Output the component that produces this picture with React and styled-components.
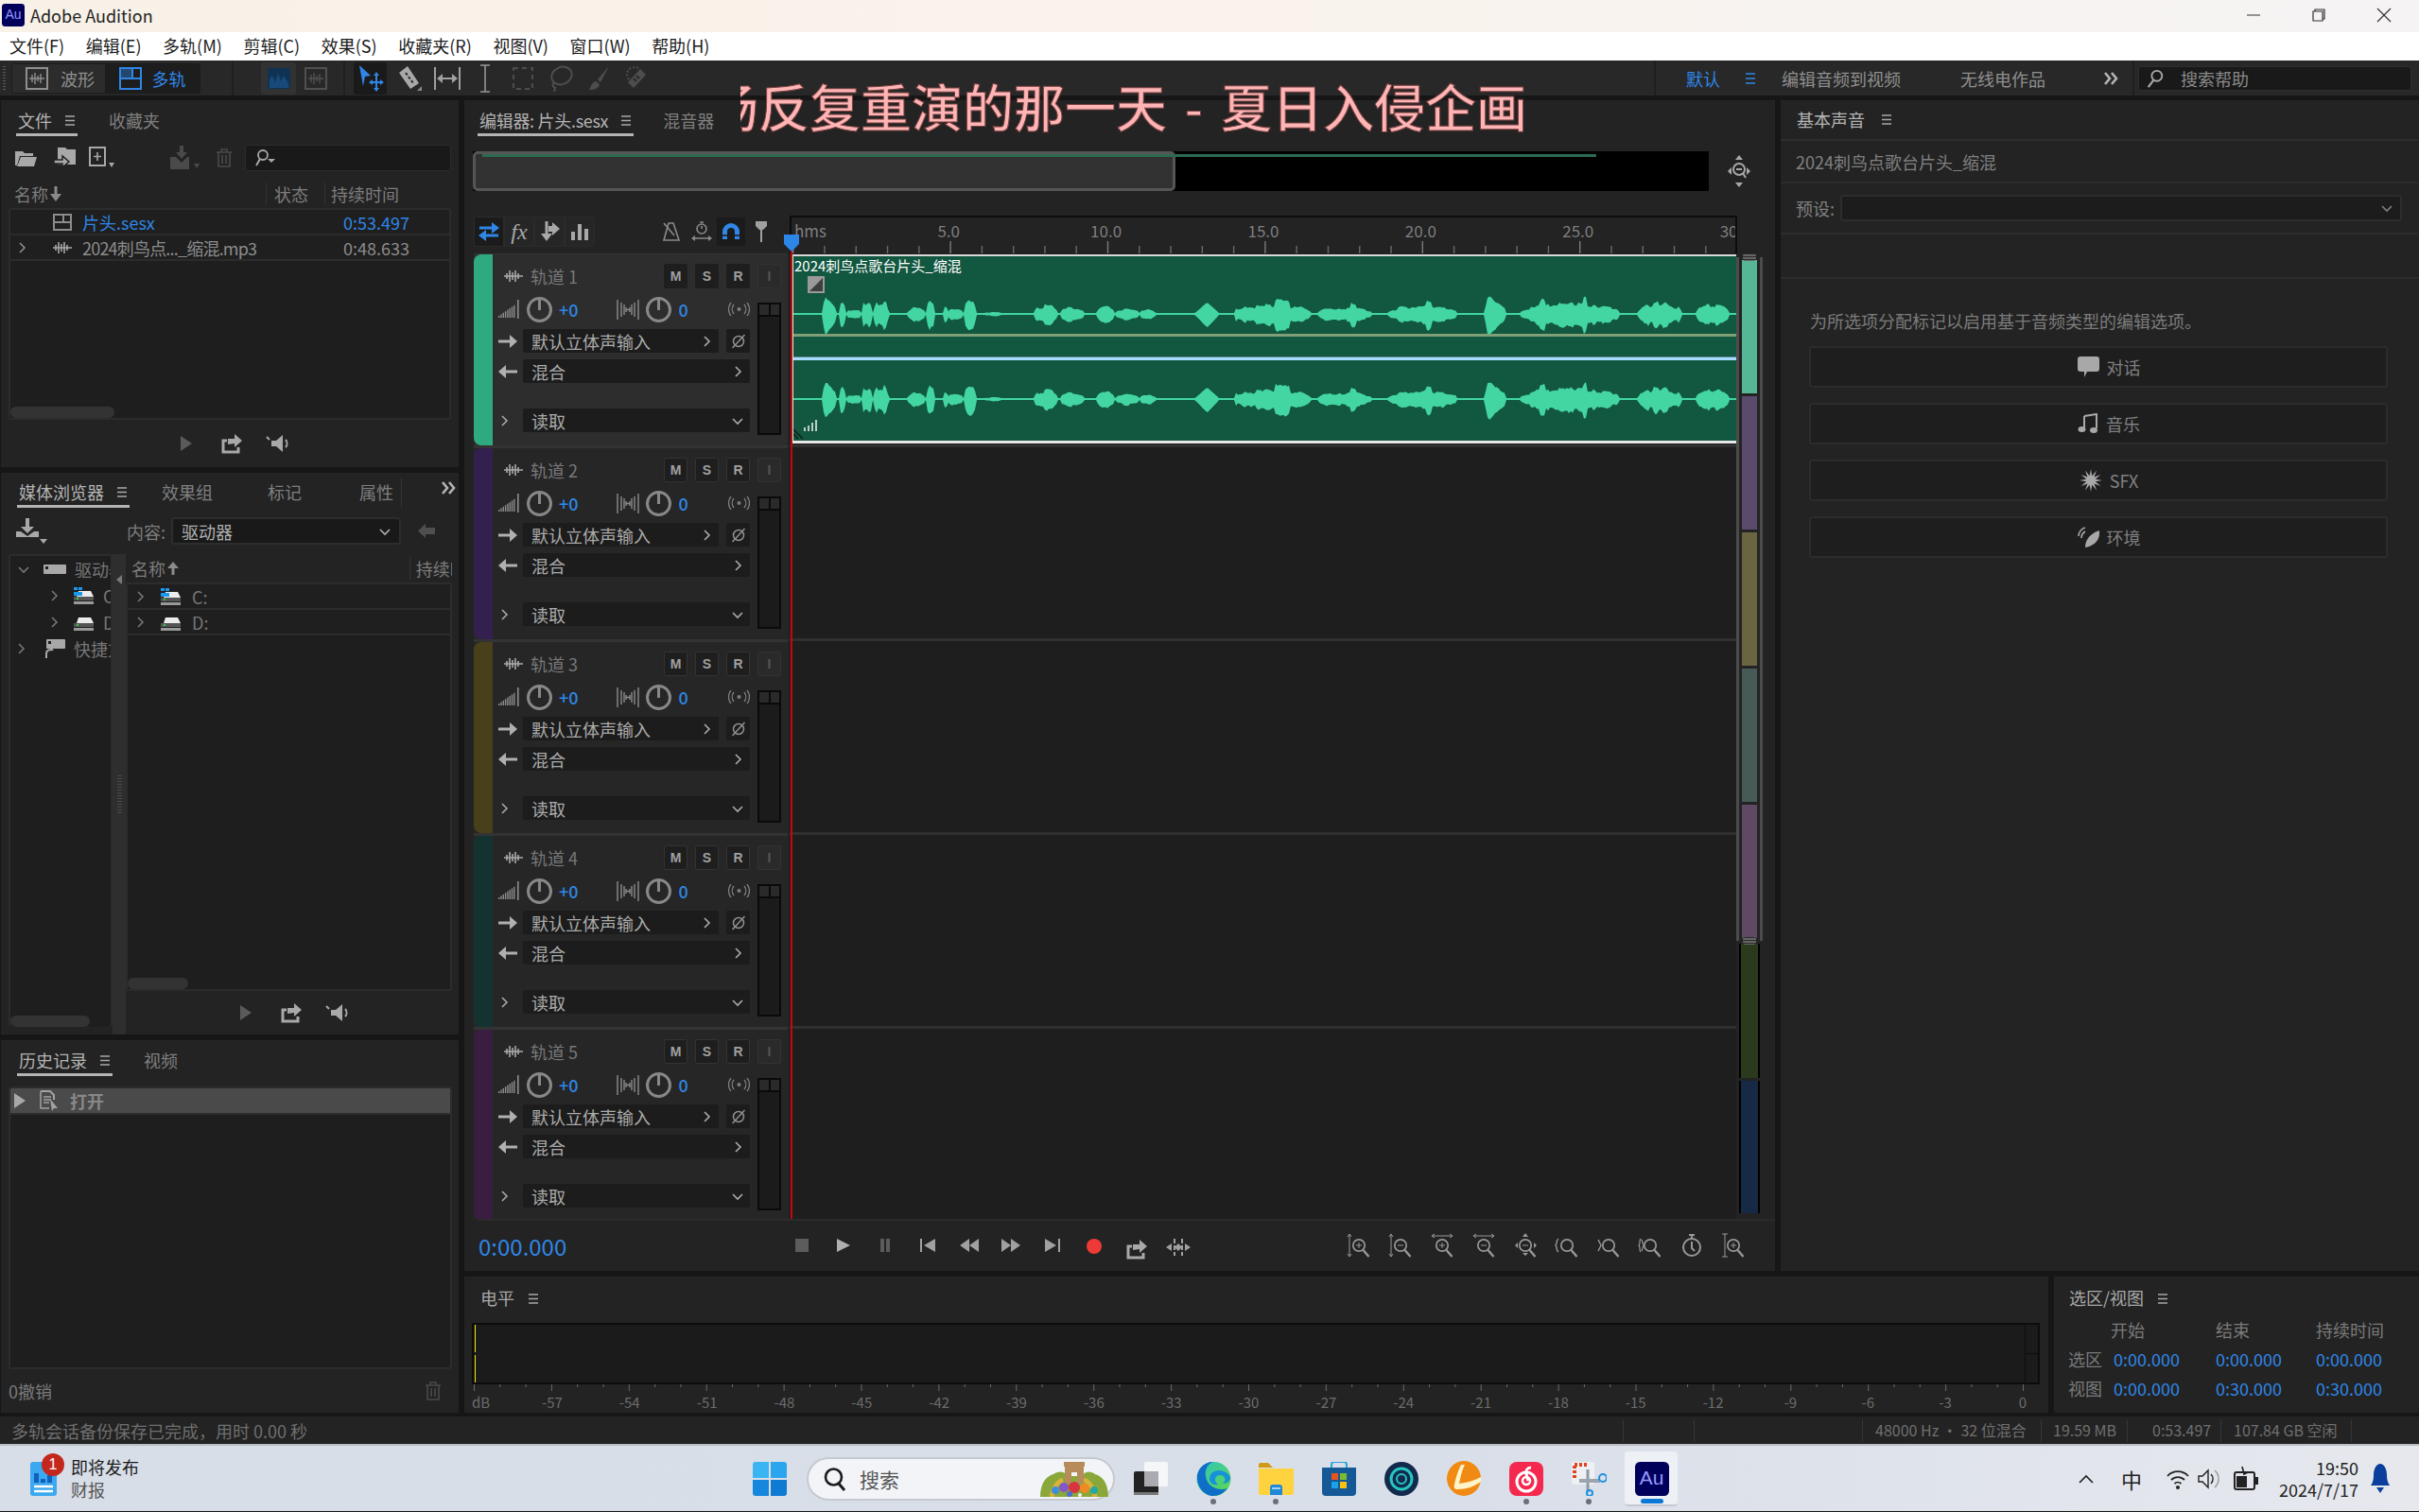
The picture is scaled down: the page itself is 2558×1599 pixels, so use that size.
import React from 'react'
import styled, { createGlobalStyle } from 'styled-components'

const GlobalStyle = createGlobalStyle`
    html, body {
        margin: 0;
        background: #161616;
    }
    * {
        box-sizing: border-box;
    }
`;

const Page = styled.div`
    position: relative;
    width: 2558px;
    height: 1599px;
    overflow: hidden;
    display: flex;
    flex-direction: column;
    background: #161616;
    color: #9a9a9a;
    font-family: "Noto Sans CJK SC", "Noto Sans", sans-serif;
    font-size: 18px;
    line-height: 24px;
`;

const Ico = ({ w, h, vb, children, color }) => (
    <svg width={w} height={h} viewBox={vb || `0 0 ${w} ${h}`} fill="none" stroke="none" style={{ display: 'block', flex: 'none', color }}>
        {children}
    </svg>
);

/* ---------- title + menu ---------- */

const TitleBar = styled.div`
    height: 34px;
    display: flex;
    align-items: center;
    padding: 0 3px 2px 2px;
    color: #222;
    background: linear-gradient(90deg, #f8f1e7, #faf3ec 50%, #f5f3f4);
`;

const AuLogo = styled.div`
    width: ${p => p.$size}px;
    height: ${p => p.$size}px;
    flex: none;
    display: flex;
    align-items: center;
    justify-content: center;
    background: #00005b;
    border-radius: ${p => p.$size / 7}px;
    color: #9999ff;
    font-family: "Liberation Sans", sans-serif;
    font-size: ${p => p.$size * 0.58}px;
    line-height: 1;
`;

const AppName = styled.span`
    margin-left: 6px;
`;

const WindowButtons = styled.div`
    margin-left: auto;
    display: flex;
    align-items: center;
`;

const WindowButton = styled.div`
    width: 69px;
    display: flex;
    justify-content: center;
`;

const MenuBar = styled.div`
    height: 30px;
    display: flex;
    align-items: center;
    gap: 22.6px;
    padding: 0 10px 2px;
    background: #fff;
    color: #1c1c1c;
`;

/* ---------- top toolbar ---------- */

const Toolbar = styled.div`
    height: 37px;
    display: flex;
    align-items: center;
    background: #282828;
`;

const Grip = styled.div`
    width: 3px;
    height: 26px;
    margin-left: 3px;
    background: repeating-linear-gradient(#5a5a5a 0 1px, transparent 1px 3px);
`;

const ModeGroup = styled.div`
    margin-left: 6px;
    display: flex;
    border: 1px solid #1c1c1c;
    border-radius: 3px;
`;

const ModeButton = styled.div`
    width: ${p => p.$w}px;
    height: 30px;
    padding-left: ${p => p.$pl || 0}px;
    display: flex;
    align-items: center;
    justify-content: center;
    gap: ${p => p.$gap || 11}px;
    background: ${p => (p.$active ? '#1d1d1d' : '#2c2c2c')};
    color: ${p => (p.$active ? '#2f86e6' : '#8f8f8f')};
`;

const BarDivider = styled.div`
    width: 2px;
    height: 37px;
    margin-left: ${p => p.$ml || 0}px;
    background: #1f1f1f;
`;

const ToolSlot = styled.div`
    width: ${p => p.$w || 40}px;
    height: 34px;
    margin-left: ${p => p.$ml || 0}px;
    display: flex;
    align-items: center;
    justify-content: center;
    border-radius: 3px;
    background: ${p => p.$bg || 'transparent'};
    color: ${p => p.$color || '#a0a0a0'};
`;

const WorkspaceGroup = styled.div`
    margin-left: auto;
    display: flex;
    align-items: center;
`;

const WorkspaceItem = styled.span`
    margin-left: ${p => p.$ml}px;
    color: ${p => (p.$active ? '#2f86e6' : '#8f8f8f')};
`;

const HelpSearch = styled.div`
    width: 289px;
    height: 26px;
    margin: 0 8px 0 4px;
    padding-left: 7px;
    display: flex;
    align-items: center;
    gap: 17px;
    background: #191919;
    border: 1px solid #2e2e2e;
    border-radius: 3px;
    color: #8a8a8a;
`;

/* ---------- workspace grid ---------- */

const Workspace = styled.div`
    height: 1393px;
    padding: 5px 0 0 1px;
    display: flex;
    gap: 6px;
    background: #161616;
`;

const LeftColumn = styled.div`
    width: 484px;
    display: flex;
    flex-direction: column;
    gap: 6px;
`;

const MainColumn = styled.div`
    flex: 1;
    display: flex;
    flex-direction: column;
    gap: 6px;
`;

const UpperRow = styled.div`
    height: 1239px;
    display: flex;
    gap: 6px;
`;

const LowerRow = styled.div`
    flex: 1;
    display: flex;
    gap: 6px;
`;

const Panel = styled.section`
    width: ${p => (p.$w ? `${p.$w}px` : 'auto')};
    height: ${p => (p.$h ? `${p.$h}px` : 'auto')};
    flex: ${p => (p.$w || p.$h ? 'none' : 1)};
    display: flex;
    flex-direction: column;
    background: #232323;
    min-width: 0;
`;

const Tabs = styled.div`
    height: ${p => p.$h || 38}px;
    flex: none;
    padding-left: ${p => p.$pl || 16}px;
    display: flex;
    align-items: flex-end;
    gap: ${p => p.$gap || 33}px;
`;

const Tab = styled.div`
    height: 28px;
    padding: 0 2px;
    margin-left: ${p => p.$ml || 0}px;
    flex: none;
    display: flex;
    align-items: flex-start;
    gap: 13px;
    line-height: 22px;
    white-space: nowrap;
    letter-spacing: ${p => p.$tight || 0}px;
    color: ${p => (p.$active ? '#b4b4b4' : '#7f7f7f')};
    border-bottom: 3px solid ${p => (p.$active ? '#b4b4b4' : 'transparent')};
`;

const TabDivider = styled.div`
    width: 1px;
    height: 32px;
    margin-left: -26px;
    background: #333;
`;

const MenuLines = ({ color = '#a8a8a8', mt = 6 }) => (
    <div style={{ marginTop: mt }}>
        <Ico w={12} h={11} color={color}>
            <path d="M1 1h10M1 5.5h10M1 10h10" stroke="currentColor" strokeWidth="1.6" />
        </Ico>
    </div>
);

/* ---------- files panel ---------- */

const IconRow = styled.div`
    height: ${p => p.$h}px;
    flex: none;
    display: flex;
    align-items: center;
    padding-left: ${p => p.$pl || 0}px;
`;

const IconSpot = styled.div`
    margin-left: ${p => p.$ml || 0}px;
    display: flex;
`;

const SearchBox = styled.div`
    width: 218px;
    height: 28px;
    margin-left: ${p => p.$ml}px;
    padding-left: 10px;
    display: flex;
    align-items: center;
    background: #191919;
    border: 1px solid #2c2c2c;
    border-radius: 3px;
`;

const HeadRow = styled.div`
    height: 30px;
    flex: none;
    margin: 0 ${p => p.$mr ?? 8}px 0 ${p => p.$ml ?? 8}px;
    display: flex;
    align-items: center;
    color: #7d7d7d;
`;

const HeadCell = styled.div`
    width: ${p => p.$w}px;
    height: 24px;
    padding-left: ${p => p.$pl || 0}px;
    display: flex;
    align-items: center;
    gap: 2px;
    overflow: hidden;
    white-space: nowrap;
    border-left: ${p => (p.$sep ? '1px solid #333' : 'none')};
`;

const ListBox = styled.div`
    flex: 1;
    min-height: 0;
    margin: ${p => p.$mt ?? 0}px ${p => p.$mr ?? 8}px 0 ${p => p.$ml ?? 8}px;
    position: relative;
    overflow: hidden;
    background: #1e1e1e;
    border: 2px solid #2c2c2c;
    border-radius: 3px;
`;

const ListRow = styled.div`
    height: ${p => p.$h || 27}px;
    display: flex;
    align-items: center;
    background: ${p => p.$bg || '#1f1f1f'};
    border-bottom: 2px solid #2c2c2c;
    color: ${p => p.$color || '#8c8c8c'};
`;

const ChevCell = styled.div`
    width: ${p => p.$w}px;
    flex: none;
    display: flex;
    padding-left: ${p => p.$pl || 0}px;
`;

const FileName = styled.div`
    width: 276px;
    margin-left: 11px;
    white-space: nowrap;
    letter-spacing: ${p => p.$tight || 0}px;
`;

const ScrollThumb = styled.div`
    position: absolute;
    left: ${p => p.$l || 0}px;
    bottom: 0;
    width: ${p => p.$w}px;
    height: 12px;
    background: #333;
    border-radius: 6px;
`;

const PlayRow = styled.div`
    height: ${p => p.$h}px;
    flex: none;
    display: flex;
    align-items: center;
    padding-left: ${p => p.$pl}px;
    color: #8a8a8a;
`;

/* ---------- media browser ---------- */

const ContentLabel = styled.span`
    margin-left: 84px;
    color: #7d7d7d;
`;

const ComboBox = styled.div`
    width: ${p => p.$w}px;
    height: ${p => p.$h || 29}px;
    margin-left: ${p => p.$ml || 0}px;
    padding: 0 9px;
    flex: none;
    display: flex;
    align-items: center;
    justify-content: space-between;
    background: #191919;
    border: 2px solid #2d2d2d;
    border-radius: 3px;
    color: #b0b0b0;
`;

const Split = styled.div`
    flex: 1;
    min-height: 0;
    display: flex;
`;

const TreeColumn = styled.div`
    width: 110px;
    flex: none;
    margin: 0 0 8px 8px;
    position: relative;
    overflow: hidden;
    background: #1e1e1e;
    border: 2px solid #2c2c2c;
    border-bottom: none;
    border-radius: 3px;
`;

const TreeRow = styled.div`
    height: 28px;
    display: flex;
    align-items: center;
    white-space: nowrap;
    padding-left: ${p => p.$pl}px;
    color: #767676;
`;

const Splitter = styled.div`
    width: 14px;
    flex: none;
    position: relative;
    background: #2e2e2e;
    display: flex;
    align-items: center;
    justify-content: center;
`;

const SplitterArrow = styled.div`
    position: absolute;
    top: 22px;
    left: 4px;
    border: 5px solid transparent;
    border-right: 6px solid #7a7a7a;
    border-left: none;
`;

const SplitterDots = styled.div`
    width: 5px;
    height: 40px;
    background: repeating-linear-gradient(#4a4a4a 0 1px, transparent 1px 3px);
`;

const ListColumn = styled.div`
    flex: 1;
    min-width: 0;
    display: flex;
    flex-direction: column;
`;

/* ---------- history ---------- */

const HistoryName = styled.span`
    margin-left: 13px;
    font-weight: 700;
    color: #888;
`;

const UndoRow = styled.div`
    height: 46px;
    flex: none;
    padding: 0 18px 0 8px;
    display: flex;
    align-items: center;
    justify-content: space-between;
    color: #7a7a7a;
`;

/* ---------- editor ---------- */

const Overview = styled.div`
    height: 42px;
    margin: 16px 0 0 9px;
    flex: none;
    display: flex;
    align-items: center;
`;

const OverviewTrack = styled.div`
    width: 1307px;
    height: 42px;
    position: relative;
    display: flex;
    background: #000;
`;

const OverviewThumb = styled.div`
    width: 743px;
    background: #323232;
    border: 3px solid #555;
    border-radius: 5px;
`;

const OverviewLine = styled.div`
    position: absolute;
    left: 10px;
    top: 3px;
    width: 1178px;
    height: 3px;
    background: #2c6a52;
`;

const OverviewZoom = styled.div`
    margin-left: 20px;
    color: #a8a8a8;
`;

const TimelineHead = styled.div`
    height: 40px;
    margin: 26px 0 0 10px;
    flex: none;
    display: flex;
`;

const TrackTools = styled.div`
    width: 334px;
    height: 34px;
    display: flex;
    align-items: center;
`;

const ButtonStrip = styled.div`
    display: flex;
    gap: 2px;
    padding: 1px;
    background: #2b2b2b;
    border-radius: 3px;
`;

const StripButton = styled.div`
    width: 30px;
    height: 30px;
    display: flex;
    align-items: center;
    justify-content: center;
    background: ${p => (p.$active ? '#1b1b1b' : '#262626')};
    color: ${p => (p.$active ? '#2f86e6' : '#a8a8a8')};
`;

const FxText = styled.span`
    font-family: "Liberation Serif", serif;
    font-style: italic;
    font-size: 24px;
    color: #a8a8a8;
`;

const Ruler = styled.div`
    width: 1002px;
    height: 40px;
    overflow: hidden;
    border: 2px solid #0c0c0c;
    border-bottom: none;
    background: #232323;
`;

const RulerLabels = styled.div`
    height: 24px;
    display: flex;
    color: #7e7e7e;
    font-size: 17px;
    line-height: 28px;
`;

const RulerLabel = styled.div`
    width: ${p => p.$w}px;
    flex: none;
    text-align: ${p => (p.$first ? 'left' : 'center')};
    padding-left: ${p => (p.$first ? 3 : 0)}px;
`;

const Arrange = styled.div`
    height: 1021px;
    margin-left: 10px;
    flex: none;
    position: relative;
    display: flex;
`;

const TrackList = styled.div`
    width: 332px;
    margin-right: 2px;
    flex: none;
    padding-top: 1px;
    overflow: hidden;
    display: flex;
    flex-direction: column;
    gap: 3px;
    background: #333;
`;

const TrackHeader = styled.div`
    height: 202px;
    flex: none;
    display: flex;
    background: ${p => (p.$selected ? '#2d2d2d' : '#262626')};
`;

const TrackStrip = styled.div`
    width: 20px;
    flex: none;
    background: ${p => p.$color};
    border-radius: 8px 0 0 8px;
`;

const TrackBody = styled.div`
    flex: 1;
    padding: 10px 7px 0 6px;
`;

const TrackTitleRow = styled.div`
    height: 26px;
    display: flex;
    align-items: center;
    padding-left: 6px;
`;

const TrackName = styled.span`
    margin-left: 8px;
    color: #787878;
`;

const TrackButtons = styled.div`
    margin-left: auto;
    display: flex;
    gap: 8px;
`;

const TrackButton = styled.div`
    width: 25px;
    height: 26px;
    display: flex;
    align-items: center;
    justify-content: center;
    background: ${p => (p.$dim ? '#2a2a2a' : '#1e1e1e')};
    border: 1px solid ${p => (p.$selected ? '#1e1e1e' : '#333')};
    border-radius: 2px;
    color: ${p => (p.$dim ? '#555' : '#a0a0a0')};
    font-family: "Liberation Sans", sans-serif;
    font-size: 14px;
    font-weight: 700;
`;

const TrackLower = styled.div`
    margin-top: 7px;
    display: flex;
    gap: 8px;
`;

const TrackControls = styled.div`
    width: 266px;
    flex: none;
`;

const MeterRow = styled.div`
    height: 30px;
    display: flex;
    align-items: center;
    gap: 7px;
`;

const BlueValue = styled.span`
    width: ${p => p.$w}px;
    color: #2f86e6;
    font-weight: 500;
`;

const RouteRow = styled.div`
    height: 25px;
    margin-top: ${p => p.$mt}px;
    display: flex;
    align-items: center;
    color: #a8a8a8;
`;

const RouteIcon = styled.div`
    width: 26px;
    flex: none;
    display: flex;
`;

const RouteCombo = styled.div`
    flex: 1;
    height: 25px;
    padding: 0 7px 0 9px;
    display: flex;
    align-items: center;
    justify-content: space-between;
    background: #1c1c1c;
    border-radius: 2px;
    color: #ababab;
`;

const PhaseBox = styled.div`
    width: 25px;
    height: 25px;
    margin-left: 8px;
    flex: none;
    display: flex;
    align-items: center;
    justify-content: center;
    background: #1c1c1c;
    border-radius: 2px;
`;

const MeterBox = styled.div`
    width: 25px;
    height: 140px;
    margin-top: 8px;
    flex: none;
    background: #1b1b1b;
    border: 2px solid #0a0a0a;
`;

const MeterCaps = styled.div`
    height: 13px;
    display: flex;
    border-bottom: 2px solid #0a0a0a;
`;

const MeterCap = styled.div`
    flex: 1;
    background: #2a2a2a;
    border-left: ${p => (p.$sep ? '2px solid #0a0a0a' : 'none')};
`;

const Lanes = styled.div`
    width: 1001px;
    flex: none;
    display: flex;
    flex-direction: column;
    background: #1e1e1e;
    overflow: hidden;
`;

const Lane = styled.div`
    height: 205px;
    flex: none;
    padding-top: 1px;
    background: #1e1e1e;
    border-bottom: 3px solid #303030;
`;

const Clip = styled.div`
    height: 200px;
    position: relative;
    margin-left: 2px;
    background: #125740;
    border-top: 2px solid #d8d8d8;
    border-left: 2px solid #e8e8e8;
    border-bottom: 3px solid #e8e8e8;
`;

const ClipTitle = styled.div`
    position: absolute;
    left: 1px;
    top: -1px;
    color: #fff;
    font-size: 15px;
    line-height: 22px;
`;

const FadeBadge = styled.div`
    position: absolute;
    left: 15px;
    top: 21px;
`;

const GainBars = styled.div`
    position: absolute;
    left: 11px;
    top: 173px;
`;

const Playhead = styled.div`
    position: absolute;
    left: 335px;
    top: -20px;
    bottom: 0;
    width: 2px;
    background: #c40808;
`;

const PlayheadCap = styled.div`
    position: absolute;
    left: -7px;
    top: 0;
`;

const ZoomScroll = styled.div`
    width: 28px;
    flex: none;
    display: flex;
    flex-direction: column;
    position: relative;
    padding: 7px 3px 0;
`;

const ZoomFrame = styled.div`
    height: 723px;
    flex: none;
    position: relative;
    margin: -3px -3px 3px;
    padding: 3px 3px 0;
    border: 3px solid #4c4c4c;
    border-width: 0 3px;
    display: flex;
    flex-direction: column;
    gap: 3px;
`;

const ZoomHandle = styled.div`
    position: absolute;
    left: 4px;
    right: 4px;
    height: 8px;
    ${p => (p.$top ? 'top: -4px;' : 'bottom: -4px;')}
    background: repeating-linear-gradient(#2a2a2a 0 1px, #666 1px 3px);
    border-radius: 3px;
`;

const ZoomSwatch = styled.div`
    height: ${p => p.$h}px;
    flex: none;
    background: ${p => p.$color};
`;

const OuterSwatch = styled(ZoomSwatch)`
    margin: 0 0 3px;
    border: solid #000;
    border-width: 0 2px;
`;

const Transport = styled.div`
    flex: 1;
    margin-left: 15px;
    display: flex;
    align-items: center;
    border-top: 2px solid #2b2b2b;
`;

const TimeValue = styled.div`
    width: 320px;
    flex: none;
    font-size: 24px;
    color: #2f86e6;
`;

const TransportButtons = styled.div`
    width: 589px;
    flex: none;
    margin-top: 7px;
    display: flex;
    color: #8f8f8f;
`;

const TransportCell = styled.div`
    width: 44.2px;
    display: flex;
    justify-content: center;
`;

const ZoomButtons = styled.div`
    margin-top: -2px;
    display: flex;
    color: #989898;
`;

const ZoomCell = styled.div`
    width: 44px;
    display: flex;
    justify-content: center;
`;

/* ---------- essential sound ---------- */

const SoundHeader = styled.div`
    height: 43px;
    flex: none;
    padding: 0 0 2px 17px;
    display: flex;
    align-items: center;
    gap: 17px;
    color: #b4b4b4;
    border-bottom: 2px solid #2d2d2d;
`;

const SoundRow = styled.div`
    height: ${p => p.$h}px;
    flex: none;
    padding: 0 18px 0 16px;
    display: flex;
    align-items: center;
    gap: 6px;
    color: #808080;
    border-bottom: 2px solid #2d2d2d;
`;

const PresetSelect = styled.div`
    flex: 1;
    height: 28px;
    padding-right: 8px;
    display: flex;
    align-items: center;
    justify-content: flex-end;
    background: #1c1c1c;
    border: 2px solid #2d2d2d;
    border-radius: 3px;
`;

const SoundHint = styled.div`
    margin: 32px 0 15px 31px;
    color: #7c7c7c;
`;

const SoundButtons = styled.div`
    margin: 0 33px 0 30px;
    display: flex;
    flex-direction: column;
    gap: 16px;
`;

const SoundButton = styled.div`
    height: 44px;
    padding-left: 22px;
    display: flex;
    align-items: center;
    justify-content: center;
    gap: 8px;
    background: #1e1e1e;
    border: 2px solid #2c2c2c;
    border-radius: 3px;
    color: #808080;
`;

/* ---------- levels + selection ---------- */

const PanelTitle = styled.div`
    height: 44px;
    flex: none;
    padding-left: ${p => p.$pl}px;
    display: flex;
    align-items: center;
    gap: 14px;
    color: #a8a8a8;
`;

const LevelBar = styled.div`
    height: 65px;
    flex: none;
    margin: 5px 9px 0 8px;
    display: flex;
    background: #1b1b1b;
    border: 2px solid #0c0c0c;
    position: relative;
`;

const LevelPeak = styled.div`
    position: absolute;
    left: 1px;
    top: 0;
    bottom: 0;
    width: 1px;
    background: linear-gradient(#f2ea00 48%, #1b1b1b 48% 52%, #f2ea00 52%);
`;

const ClipLeds = styled.div`
    margin-left: auto;
    width: 14px;
    display: flex;
    flex-direction: column;
    border-left: 1px solid #0c0c0c;
`;

const ClipLed = styled.div`
    flex: 1;
    border-top: ${p => (p.$sep ? '1px solid #0c0c0c' : 'none')};
`;

const LevelTicks = styled.div`
    margin-left: 8px;
    height: 7px;
`;

const LevelLabels = styled.div`
    margin-left: 8px;
    display: flex;
    color: #6c6c6c;
    font-size: 15px;
    line-height: 22px;
    margin-top: 1px;
`;

const LevelLabel = styled.div`
    width: ${p => p.$w}px;
    flex: none;
    text-align: ${p => (p.$first ? 'left' : 'center')};
`;

const SelectionGrid = styled.div`
    margin-top: -4px;
    padding-left: 15px;
    display: grid;
    grid-template-columns: 48px 108px 106px auto;
    grid-auto-rows: 31px;
    align-items: center;
    color: #7a7a7a;
`;

const GridHead = styled.div`
    margin-left: ${p => p.$ml || 0}px;
`;

const GridValue = styled.div`
    color: #2f86e6;
`;

/* ---------- status + taskbar ---------- */

const StatusBar = styled.div`
    height: 33px;
    flex: none;
    padding: 1px 0 0 12px;
    display: flex;
    align-items: center;
    background: #232323;
    border-top: 4px solid #161616;
    color: #6f6f6f;
    font-size: 16px;
`;

const StatusMessage = styled.div`
    width: 1704px;
    flex: none;
    font-size: 18px;
    white-space: nowrap;
`;

const StatusCell = styled.div`
    width: ${p => p.$w}px;
    height: 24px;
    flex: none;
    padding-left: ${p => p.$pl || 0}px;
    white-space: nowrap;
    border-left: 1px solid #363636;
    line-height: 22px;
`;

const Taskbar = styled.div`
    height: 71px;
    flex: none;
    display: flex;
    align-items: center;
    background: linear-gradient(90deg, #d8dee8, #d9dfe9 60%, #e6e8ee);
    border-top: 2px solid #b9bdc4;
    color: #1c1c1c;
`;

const NewsWidget = styled.div`
    width: 796px;
    padding-left: 32px;
    flex: none;
    display: flex;
    align-items: center;
    gap: 15px;
`;

const NewsIcon = styled.div`
    position: relative;
`;

const NewsBadge = styled.div`
    position: absolute;
    top: -9px;
    left: 12px;
    width: 24px;
    height: 24px;
    display: flex;
    align-items: center;
    justify-content: center;
    border-radius: 50%;
    background: #c4281c;
    color: #fff;
    font-family: "Liberation Sans", sans-serif;
    font-size: 16px;
`;

const NewsText = styled.div`
    line-height: 24px;
    margin-top: -1px;
`;

const NewsSub = styled.div`
    color: #555;
`;

const StartButton = styled.div`
    width: 36px;
    flex: none;
    margin-right: 21px;
`;

const TaskSearch = styled.div`
    width: 326px;
    height: 46px;
    flex: none;
    padding-left: 16px;
    display: flex;
    align-items: center;
    gap: 14px;
    border-radius: 23px;
    background: #f2f4f8;
    border: 2px solid #c6c9d0;
    color: #555;
    font-size: 21px;
    position: relative;
`;

const SearchArt = styled.div`
    position: absolute;
    right: 3px;
    bottom: 2px;
`;

const TaskApps = styled.div`
    margin-left: 20px;
    display: flex;
    gap: 30.2px;
`;

const TaskApp = styled.div`
    width: 36px;
    height: 36px;
    position: relative;
    display: flex;
    align-items: center;
    justify-content: center;
`;

const TaskDot = styled.div`
    position: absolute;
    left: 15px;
    bottom: -9px;
    width: 6px;
    height: 6px;
    border-radius: 50%;
    background: #6b6f76;
`;

const TaskActive = styled.div`
    position: absolute;
    left: -11px;
    top: -11px;
    width: 56px;
    height: 58px;
    background: #edf0f5;
    border-radius: 4px;
    border-bottom: 2px solid #c4c8d0;
`;

const TaskActiveBar = styled.div`
    position: absolute;
    left: 6px;
    bottom: -8px;
    width: 24px;
    height: 5px;
    border-radius: 3px;
    background: #0a78d4;
`;

const Tray = styled.div`
    margin-left: auto;
    padding-right: 31px;
    display: flex;
    align-items: center;
    color: #222;
`;

const TrayCell = styled.div`
    margin-left: ${p => p.$ml}px;
    display: flex;
`;

const TrayInput = styled.span`
    font-size: 22px;
    margin-left: ${p => p.$ml}px;
`;

const ClockBox = styled.div`
    margin-left: 22px;
    text-align: right;
    line-height: 23px;
    color: #222;
`;

/* ---------- lyric overlay ---------- */

const Lyric = styled.div`
    position: absolute;
    left: 783px;
    top: 73px;
    width: 832px;
    overflow: hidden;
    direction: rtl;
    white-space: nowrap;
    font-size: 54px;
    font-weight: 500;
    line-height: 78px;
    color: #ffb5b5;
    -webkit-text-stroke: 1px #7a4040;
`;

const LyricInner = styled.span`
    direction: ltr;
    unicode-bidi: bidi-override;
`;

const LyricGap = styled.span`
    display: inline-block;
    width: 57px;
    text-align: center;
`;

/* ---------- icons ---------- */

const Chevron = ({ size = 12, color }) => (
    <Ico w={size} h={size} vb="0 0 12 12" color={color}>
        <path d="M4 1l5 5-5 5" stroke="currentColor" strokeWidth="1.6" />
    </Ico>
);

const ChevronDown = ({ size = 12, color }) => (
    <Ico w={size} h={size} vb="0 0 12 12" color={color}>
        <path d="M1 4l5 5 5-5" stroke="currentColor" strokeWidth="1.6" />
    </Ico>
);

const Waves = ({ color = '#aaa', w = 20 }) => (
    <Ico w={w} h={14} vb="0 0 20 14" color={color}>
        <path d="M0 7h20M3 4v6M6 1v12M9 3v8M12 1v12M15 4v6" stroke="currentColor" strokeWidth="1.6" />
    </Ico>
);

const VolumeBars = () => (
    <Ico w={23} h={22} color="#8c8c8c">
        {[0, 1, 2, 3, 4, 5, 6, 7].map(i => (
            <rect key={i} x={i * 2.3} y={20 - i * 1.6 - 2} width="1.4" height={i * 1.6 + 2} fill="currentColor" />
        ))}
        <rect x="20" y="1" width="1.6" height="20" fill="currentColor" />
    </Ico>
);

const PanBars = () => (
    <Ico w={24} h={21} color="#8c8c8c">
        <path d="M1 0v21M23 0v21M5 3v15M19 3v15M8 5v11M16 5v11M10 8v5M14 8v5M10 10.5h4" stroke="currentColor" strokeWidth="1.4" />
    </Ico>
);

const Knob = () => (
    <Ico w={27} h={27} color="#888">
        <circle cx="13.5" cy="13.5" r="12" stroke="currentColor" strokeWidth="3" />
        <path d="M13.5 1v13" stroke="currentColor" strokeWidth="3" />
    </Ico>
);

const Broadcast = () => (
    <Ico w={23} h={14} color="#7f7f7f">
        <circle cx="11.5" cy="7" r="2" fill="currentColor" />
        <path d="M6 2a8 8 0 0 0 0 10M17 2a8 8 0 0 1 0 10M3 0a11 11 0 0 0 0 14M20 0a11 11 0 0 1 0 14" stroke="currentColor" strokeWidth="1.3" />
    </Ico>
);

const ArrowRight = () => (
    <Ico w={20} h={14} color="#b0b0b0">
        <path d="M0 7h16" stroke="currentColor" strokeWidth="3" />
        <path d="M12 0l8 7-8 7z" fill="currentColor" />
    </Ico>
);

const ArrowLeft = () => (
    <Ico w={20} h={14} color="#b0b0b0">
        <path d="M4 7h16" stroke="currentColor" strokeWidth="3" />
        <path d="M8 0L0 7l8 7z" fill="currentColor" />
    </Ico>
);

const PhaseIcon = () => (
    <Ico w={16} h={16} color="#909090">
        <circle cx="8" cy="8" r="5.5" stroke="currentColor" strokeWidth="1.5" />
        <path d="M1.5 15L14.5 1" stroke="currentColor" strokeWidth="1.5" />
    </Ico>
);

const WaveBox = ({ color = 'currentColor' }) => (
    <Ico w={24} h={26} color={color}>
        <rect x="1" y="2" width="22" height="22" stroke="currentColor" strokeWidth="2" />
        <path d="M4 13h16M7 9v8M10 7v12M13 10v6M16 8v10" stroke="currentColor" strokeWidth="1.4" />
    </Ico>
);

const MultiBox = () => (
    <Ico w={24} h={26} color="#2f86e6">
        <rect x="1" y="2" width="22" height="22" stroke="currentColor" strokeWidth="2" />
        <path d="M1 13h22M14 2v11" stroke="currentColor" strokeWidth="2" />
        <rect x="2" y="3" width="12" height="10" fill="currentColor" opacity=".4" />
    </Ico>
);

const BlueSpectrum = () => (
    <Ico w={24} h={26}>
        <rect x="0" y="2" width="24" height="22" fill="#103354" />
        <path d="M2 23V14l3-4 3 7 3-10 3 9 3-6 3 5 2 3v5z" fill="#174a78" />
    </Ico>
);

const MoveTool = () => (
    <Ico w={28} h={28} color="#2f86e6">
        <path d="M2 0l12 11-6 1 -2 10z" fill="currentColor" />
        <path d="M20 10v16M13 18h14" stroke="currentColor" strokeWidth="2" />
        <path d="M20 7l3 4h-6zM20 28l3-4h-6zM12 18l4-3v6zM28 18l-4-3v6z" fill="currentColor" />
    </Ico>
);

const Razor = () => (
    <Ico w={26} h={28} color="#a8a8a8">
        <path d="M11 1l12 18-9 6L2 8z" fill="currentColor" />
        <path d="M9 8l8 11" stroke="#282828" strokeWidth="2" strokeDasharray="3 2" />
        <path d="M26 22v5h-5z" fill="#888" />
    </Ico>
);

const TimeSel = () => (
    <Ico w={30} h={26} color="#a0a0a0">
        <path d="M2 1v24M28 1v24M6 13h18" stroke="currentColor" strokeWidth="2" />
        <path d="M4 13l6-5v10zM26 13l-6-5v10z" fill="currentColor" />
    </Ico>
);

const IBeam = () => (
    <Ico w={12} h={30} color="#969696">
        <path d="M1 1h10M1 29h10M6 1v28" stroke="currentColor" strokeWidth="1.6" />
    </Ico>
);

const Marquee = () => (
    <Ico w={22} h={24} color="#4d4d4d">
        <rect x="1" y="1" width="20" height="22" stroke="currentColor" strokeWidth="2" strokeDasharray="5 4" />
    </Ico>
);

const Lasso = () => (
    <Ico w={26} h={28} color="#4d4d4d">
        <ellipse cx="14" cy="11" rx="11" ry="9" stroke="currentColor" strokeWidth="2" transform="rotate(-25 14 11)" />
        <path d="M7 18c-3 1-3 4-1 5s1 4-1 4" stroke="currentColor" strokeWidth="2" />
    </Ico>
);

const Brush = () => (
    <Ico w={26} h={28} color="#4d4d4d">
        <path d="M24 1L12 15l3 3zM10 17c-4 1-5 5-7 9 5 0 10-1 11-6z" fill="currentColor" />
    </Ico>
);

const Heal = () => (
    <Ico w={28} h={30} color="#4d4d4d">
        <path d="M18 5l6 6-13 14-6-6z" fill="currentColor" />
        <path d="M6 16C1 9 6 1 16 4" stroke="currentColor" strokeWidth="2" strokeDasharray="2 2" />
        <path d="M14 12l3 3M11 15l3 3" stroke="#282828" strokeWidth="2" />
    </Ico>
);

const Magnifier = ({ size = 22, color = '#aaa' }) => (
    <Ico w={size} h={size} vb="0 0 22 22" color={color}>
        <circle cx="13" cy="8" r="6" stroke="currentColor" strokeWidth="2" />
        <path d="M9 13l-6 8" stroke="currentColor" strokeWidth="2.4" />
    </Ico>
);

const FolderOpen = () => (
    <Ico w={24} h={20} color="#a8a8a8">
        <path d="M1 3h8l2 2h9v3H6L3 18H1z M7 9h17l-3 10H3z" fill="currentColor" />
    </Ico>
);

const FolderImport = () => (
    <Ico w={26} h={24} color="#a8a8a8">
        <path d="M5 1h8l2 2h9v16H5z" fill="currentColor" />
        <path d="M1 14h9v-4l7 6-7 6v-4H1z" fill="currentColor" stroke="#232323" strokeWidth="1.5" />
    </Ico>
);

const NewFile = () => (
    <Ico w={28} h={26} color="#a8a8a8">
        <rect x="1" y="2" width="16" height="19" stroke="currentColor" strokeWidth="2" />
        <path d="M9 7v9M5 11.5h8" stroke="currentColor" strokeWidth="1.6" />
        <path d="M21 18h6l-3 5z" fill="currentColor" />
    </Ico>
);

const ImportDim = () => (
    <Ico w={32} h={26} color="#4a4a4a">
        <path d="M11 0h4v7h4l-6 7-6-7h4z" fill="currentColor" />
        <path d="M1 12h6l6 6 6-6h2v13H1z" fill="currentColor" />
        <path d="M26 19h6l-3 5z" fill="currentColor" />
    </Ico>
);

const Trash = ({ color = '#4a4a4a' }) => (
    <Ico w={18} h={20} color={color}>
        <path d="M1 4h16M6 4V1h6v3M3 4v15h12V4M7 7v9M11 7v9" stroke="currentColor" strokeWidth="1.6" />
    </Ico>
);

const MiniSearch = () => (
    <Ico w={22} h={20} color="#a8a8a8">
        <circle cx="8" cy="7" r="5" stroke="currentColor" strokeWidth="1.8" />
        <path d="M5 11l-4 7" stroke="currentColor" strokeWidth="2" />
        <path d="M13 11h8l-4 4z" fill="currentColor" />
    </Ico>
);

const SessionIcon = () => (
    <Ico w={20} h={18} color="#8c8c8c">
        <rect x="1" y="1" width="18" height="16" stroke="currentColor" strokeWidth="2" />
        <path d="M1 9h18M11 1v8" stroke="currentColor" strokeWidth="2" />
    </Ico>
);

const PlayDim = ({ color = '#5a5a5a' }) => (
    <Ico w={14} h={16} color={color}>
        <path d="M1 0l12 8-12 8z" fill="currentColor" />
    </Ico>
);

const LoopIcon = () => (
    <Ico w={22} h={22} color="#a8a8a8">
        <path d="M6 8H2v12h16v-5" stroke="currentColor" strokeWidth="3" fill="none" />
        <path d="M7 12V6h7V1l8 7-8 7v-4z" fill="currentColor" />
    </Ico>
);

const Speaker = () => (
    <Ico w={28} h={20} color="#a8a8a8">
        <path d="M6 7h5l7-6v18l-7-6H6z" fill="currentColor" />
        <path d="M21 6a6 6 0 0 1 0 8M1 3l3 3" stroke="currentColor" strokeWidth="2" />
    </Ico>
);

const ImportDown = () => (
    <Ico w={34} h={28} color="#a8a8a8">
        <path d="M11 0h4v9h5l-7 7-7-7h5z" fill="currentColor" />
        <path d="M1 14h5l7 5 7-5h5v6H1z" fill="currentColor" />
        <path d="M26 22h8l-4 5z" fill="currentColor" />
    </Ico>
);

const DriveDim = () => (
    <Ico w={24} h={12} color="#a8a8a8">
        <rect y="1" width="24" height="10" rx="1" fill="currentColor" />
        <rect x="2" y="3" width="3" height="3" fill="#1e1e1e" />
    </Ico>
);

const DiskIcon = ({ system }) => (
    <Ico w={21} h={18} color="#bbb">
        <path d="M3 10l2-6h13l3 6z" fill="#ececec" />
        {system && <path d="M0 0h4v3H0zM5 0h4v3H5zM0 5h9v4H0z" fill="#1a97ef" />}
        <rect y="10" width="21" height="4" fill="#555" />
        <rect x="3" y="11" width="2" height="2" fill="#2ecc40" />
        <rect y="15" width="21" height="3" fill="#9a9a9a" />
    </Ico>
);

const ShortcutIcon = () => (
    <Ico w={22} h={22} color="#a8a8a8">
        <rect x="2" y="1" width="20" height="10" rx="1" fill="currentColor" />
        <rect x="4" y="3" width="3" height="3" fill="#1e1e1e" />
        <path d="M2 21v-5c0-3 2-4 6-4l-2-3" stroke="currentColor" strokeWidth="2" />
    </Ico>
);

const ArrowBack = () => (
    <Ico w={18} h={15} color="#4f4f4f">
        <path d="M0 7.5L8 0v4h10v7H8v4z" fill="currentColor" />
    </Ico>
);

const DoubleChevron = ({ color = '#b4b4b4', size = 15 }) => (
    <Ico w={size} h={14} vb="0 0 15 14" color={color}>
        <path d="M1 1l5 6-5 6M8 1l5 6-5 6" stroke="currentColor" strokeWidth="2.6" />
    </Ico>
);

const HistoryDoc = () => (
    <Ico w={19} h={22} color="#a2a2a2">
        <path d="M1 1h10l4 4v5" stroke="currentColor" strokeWidth="2" />
        <path d="M1 1v18h9M4 7h8M4 10h8M4 13h6" stroke="currentColor" strokeWidth="1.5" />
        <path d="M11 9l8 10-4 0-2 3z" fill="currentColor" />
    </Ico>
);

const ZoomGlass = ({ children }) => (
    <Ico w={26} h={26} color="currentColor">
        <circle cx="13" cy="13" r="6.2" stroke="currentColor" strokeWidth="1.7" />
        <path d="M17.5 18l6 7" stroke="currentColor" strokeWidth="2.4" />
        {children}
    </Ico>
);

const ZoomIcons = [
    <ZoomGlass key="a"><path d="M10 13h6M13 10v6" stroke="currentColor" /><path d="M3 1v24M1 4l2-3 2 3M1 22l2 3 2-3" stroke="currentColor" /></ZoomGlass>,
    <ZoomGlass key="b"><path d="M10 13h6" stroke="currentColor" /><path d="M3 1v24M1 4l2-3 2 3M1 22l2 3 2-3" stroke="currentColor" /></ZoomGlass>,
    <ZoomGlass key="c"><path d="M10 13h6M13 10v6" stroke="currentColor" /><path d="M2 3h22M5 1L2 3l3 2M21 1l3 2-3 2" stroke="currentColor" /></ZoomGlass>,
    <ZoomGlass key="d"><path d="M10 13h6" stroke="currentColor" /><path d="M2 3h22M5 1L2 3l3 2M21 1l3 2-3 2" stroke="currentColor" /></ZoomGlass>,
    <ZoomGlass key="e"><path d="M10 13h6" stroke="currentColor" /><path d="M13 0l3 4h-6zM13 24l3-3h-6zM2 13l3-3v6zM25 13l-3-3v6z" fill="currentColor" /></ZoomGlass>,
    <ZoomGlass key="f"><path d="M4 6C1 8 3 11 1 13c2 2 0 5 3 7" stroke="currentColor" strokeWidth="1.4" /></ZoomGlass>,
    <ZoomGlass key="g"><path d="M2 7l3 6-3 6" stroke="currentColor" strokeWidth="1.4" /></ZoomGlass>,
    <ZoomGlass key="h"><path d="M3 6c-2 2 0 5-2 7 2 2 0 5 2 7M4 7l2 6-2 6" stroke="currentColor" strokeWidth="1.2" /></ZoomGlass>,
    <Ico key="i" w={22} h={26} color="currentColor">
        <circle cx="11" cy="15" r="9" stroke="currentColor" strokeWidth="2" />
        <path d="M11 1v5M8 2h6M11 9v7l3 3" stroke="currentColor" strokeWidth="2" />
    </Ico>,
    <ZoomGlass key="j"><path d="M10 13h6M13 10v6" stroke="currentColor" /><path d="M1 1h6M1 25h6M4 1v24" stroke="currentColor" /></ZoomGlass>,
];

const TransportIcons = [
    <Ico key="stop" w={14} h={14} color="#5c5c5c"><rect width="14" height="14" fill="currentColor" /></Ico>,
    <Ico key="play" w={14} h={14} color="#b0b0b0"><path d="M0 0l14 7-14 7z" fill="currentColor" /></Ico>,
    <Ico key="pause" w={14} h={14} color="#5c5c5c"><path d="M2 0h4v14H2zM8 0h4v14H8z" fill="currentColor" /></Ico>,
    <Ico key="start" w={18} h={14}><path d="M1 0h2v14H1zM17 0v14L5 7z" fill="#a0a0a0" /></Ico>,
    <Ico key="rew" w={22} h={14}><path d="M11 0v14L1 7zM21 0v14L11 7z" fill="#a0a0a0" /></Ico>,
    <Ico key="ff" w={22} h={14}><path d="M1 0v14l10-7zM11 0v14l10-7z" fill="#a0a0a0" /></Ico>,
    <Ico key="end" w={18} h={14}><path d="M1 0v14l12-7zM15 0h2v14h-2z" fill="#a0a0a0" /></Ico>,
    <Ico key="rec" w={16} h={16}><circle cx="8" cy="8" r="8" fill="#ee3a36" /></Ico>,
    <LoopIcon key="loop" />,
    <Ico key="skip" w={26} h={18} color="#a0a0a0">
        <path d="M9 0v18M17 0v18" stroke="currentColor" strokeWidth="2" strokeDasharray="5 2" />
        <path d="M0 9l6-4v8zM26 9l-6-4v8zM9 9l4-4 4 4-4 4z" fill="currentColor" />
    </Ico>,
];

const SpeechIcon = () => (
    <Ico w={23} h={22} color="#a8a8a8">
        <path d="M3 0h17a3 3 0 0 1 3 3v10a3 3 0 0 1-3 3H10l-3 6v-6H3a3 3 0 0 1-3-3V3a3 3 0 0 1 3-3z" fill="currentColor" />
    </Ico>
);

const NoteIcon = () => (
    <Ico w={22} h={22} color="#a8a8a8">
        <path d="M7 3l13-2v15" stroke="currentColor" strokeWidth="2" fill="none" />
        <path d="M7 3v13" stroke="currentColor" strokeWidth="2" />
        <ellipse cx="4.5" cy="17" rx="4" ry="3" fill="currentColor" />
        <ellipse cx="17" cy="18" rx="4" ry="3" fill="currentColor" />
    </Ico>
);

const BurstIcon = () => {
    const points = [];
    for (let i = 0; i < 24; i++) {
        const r = i % 2 === 0 ? 12 : 5;
        const a = (i / 24) * Math.PI * 2;
        points.push(`${12 + Math.cos(a) * r},${12 + Math.sin(a) * r}`);
    }
    return (
        <Ico w={24} h={24} color="#a8a8a8">
            <polygon points={points.join(' ')} fill="currentColor" />
        </Ico>
    );
};

const LeafIcon = () => (
    <Ico w={23} h={24} color="#a8a8a8">
        <path d="M23 5c1 8-3 16-15 18 0-9 6-15 15-18z" fill="currentColor" />
        <path d="M1 11c0-4 3-8 7-9M4 13c0-3 1-5 4-7" stroke="currentColor" strokeWidth="1.6" />
    </Ico>
);

const ToolSwap = () => (
    <Ico w={22} h={22} color="currentColor">
        <path d="M1 7h14M21 15H7" stroke="currentColor" strokeWidth="3" />
        <path d="M14 1l8 6-8 6zM8 9l-8 6 8 6z" fill="currentColor" />
    </Ico>
);

const SendIcon = () => (
    <Ico w={22} h={22} color="#a8a8a8">
        <path d="M8 0v14" stroke="currentColor" strokeWidth="3" />
        <path d="M2 13h12l-6 8z" fill="currentColor" />
        <path d="M10 5h4V1l8 7-8 7v-4h-4z" fill="currentColor" />
    </Ico>
);

const EqBars = () => (
    <Ico w={18} h={18} color="#a8a8a8">
        <path d="M0 9h4v9H0zM7 1h4v17H7zM14 6h4v12h-4z" fill="currentColor" />
    </Ico>
);

const Metronome = () => (
    <Ico w={18} h={20} color="#8a8a8a">
        <path d="M6 1h5l6 18H1z" stroke="currentColor" strokeWidth="1.6" />
        <path d="M1 1l11 13" stroke="currentColor" strokeWidth="1.6" />
    </Ico>
);

const TimerIcon = () => (
    <Ico w={22} h={22} color="#8a8a8a">
        <circle cx="11" cy="8" r="5" stroke="currentColor" strokeWidth="1.6" />
        <path d="M9 1h4M11 5v3M1 18h20" stroke="currentColor" strokeWidth="1.6" />
        <path d="M0 18l4-3v6zM22 18l-4-3v6z" fill="currentColor" />
    </Ico>
);

const MagnetIcon = () => (
    <Ico w={18} h={18} color="#2f86e6">
        <path d="M0 17V9a9 9 0 0 1 18 0v8h-5V9a4 4 0 0 0-8 0v8z" fill="currentColor" />
        <path d="M0 13h5M13 13h5" stroke="#1b1b1b" strokeWidth="1.4" />
    </Ico>
);

const PinIcon = () => (
    <Ico w={12} h={22} color="#a0a0a0">
        <path d="M0 0h12v5l-4 4H4L0 5z" fill="currentColor" />
        <path d="M6 9v13" stroke="currentColor" strokeWidth="2" />
    </Ico>
);

const ZoomToFit = () => (
    <Ico w={24} h={34} vb="0 0 24 34" color="currentColor">
        <path d="M12 0l4 5H8zM12 34l4-5H8zM0 17l4-4v8zM24 17l-4-4v8z" fill="currentColor" />
        <circle cx="12" cy="15" r="6" stroke="currentColor" strokeWidth="2" />
        <path d="M9 15h6M16 19l3 5" stroke="currentColor" strokeWidth="2" />
    </Ico>
);

const WindowsLogo = () => (
    <Ico w={36} h={36}>
        <path d="M0 3a3 3 0 0 1 3-3h14v17H0z" fill="#3bb4f3" />
        <path d="M19 0h14a3 3 0 0 1 3 3v14H19z" fill="#2ba5ee" />
        <path d="M0 19h17v17H3a3 3 0 0 1-3-3z" fill="#1587dc" />
        <path d="M19 19h17v14a3 3 0 0 1-3 3H19z" fill="#0f7ad2" />
    </Ico>
);

const TaskMag = () => (
    <Ico w={24} h={26} color="#1c1c1c">
        <circle cx="10.5" cy="11" r="8.5" stroke="currentColor" strokeWidth="2.6" />
        <path d="M16 18l6 7" stroke="currentColor" strokeWidth="3" />
    </Ico>
);

const SearchScene = () => (
    <Ico w={76} h={40}>
        <path d="M2 40c0-14 6-22 14-24 4-3 12-4 14 2h16c4-6 10-5 14-2 8 2 14 10 14 24z" fill="#8aa83a" />
        <path d="M14 40c2-10 6-16 12-18M60 40c-2-10-6-16-12-18" stroke="#d9b23a" strokeWidth="5" />
        <path d="M27 3h22v5h-1v18h-7V14h-6v12h-7V8h-1z" fill="#b88c5a" />
        <circle cx="38" cy="30" r="6" fill="#d9333f" />
        <circle cx="27" cy="30" r="5" fill="#8456c8" />
        <circle cx="49" cy="31" r="5" fill="#f08a24" />
        <circle cx="18" cy="33" r="4" fill="#3e8ed9" />
        <circle cx="59" cy="33" r="4" fill="#25a8a0" />
        <circle cx="33" cy="37" r="3" fill="#4a6fd0" />
        <circle cx="44" cy="38" r="2" fill="#f2f4f8" />
    </Ico>
);

const TaskViewIcon = () => (
    <Ico w={36} h={36}>
        <rect x="11" y="0" width="25" height="26" rx="2" fill="#f5f6f8" />
        <rect x="0" y="10" width="26" height="25" rx="2" fill="#222" />
        <rect x="11" y="10" width="15" height="16" fill="#a9abb0" />
        <rect x="0" y="32" width="26" height="3" fill="#777" />
    </Ico>
);

const EdgeIcon = () => (
    <Ico w={37} h={36}>
        <defs>
            <linearGradient id="edgeA" x1="0" y1="0" x2="1" y2="1">
                <stop offset="0" stopColor="#2bc5c0" />
                <stop offset="1" stopColor="#62d84b" />
            </linearGradient>
        </defs>
        <circle cx="18.5" cy="18" r="18" fill="url(#edgeA)" />
        <path d="M1 14C3 5 10 0 18 0c-8 3-10 12-7 19 3 8 13 12 22 9-4 5-9 8-15 8C8 36 0 26 1 14z" fill="#0f6fc8" />
        <path d="M14 18c0-6 5-9 10-9s10 3 12 7c0 5-4 7-8 7 4-3 3-9-3-9-3 0-5 2-5 5 0 2 1 3 3 5-5 1-9-2-9-6z" fill="#1792d8" />
    </Ico>
);

const FolderIcon = () => (
    <Ico w={37} h={34}>
        <path d="M0 2a2 2 0 0 1 2-2h8l5 5h-15z" fill="#d19a12" />
        <path d="M0 6h37v26a2 2 0 0 1-2 2H2a2 2 0 0 1-2-2z" fill="#ffd33f" />
        <path d="M12 34v-8a3 3 0 0 1 3-3h7a3 3 0 0 1 3 3v8z" fill="#1f88d8" />
        <path d="M14 27h9" stroke="#cfe8fa" strokeWidth="1.5" />
    </Ico>
);

const StoreIcon = () => (
    <Ico w={36} h={36}>
        <path d="M10 6V3a3 3 0 0 1 3-3h10a3 3 0 0 1 3 3v3" stroke="#29a3e0" strokeWidth="2" />
        <path d="M0 6h36v26a4 4 0 0 1-4 4H4a4 4 0 0 1-4-4z" fill="#155a96" />
        <path d="M10 12h7v7h-7z" fill="#e8541f" />
        <path d="M19 12h7v7h-7z" fill="#7dbb2d" />
        <path d="M10 21h7v7h-7z" fill="#1ba2e6" />
        <path d="M19 21h7v7h-7z" fill="#fcc20f" />
    </Ico>
);

const RingApp = () => (
    <Ico w={36} h={36}>
        <circle cx="18" cy="18" r="18" fill="#122a4c" />
        <circle cx="18" cy="18" r="11" stroke="#25c6c0" strokeWidth="3" />
        <circle cx="18" cy="18" r="5" stroke="#25c6c0" strokeWidth="2" />
    </Ico>
);

const OrangeApp = () => (
    <Ico w={36} h={37}>
        <ellipse cx="18" cy="18.5" rx="18" ry="18.5" fill="#f08a12" />
        <path d="M19 4c-3 6-5 14-6 20 8-1 15-3 23-7l0 5c-7 5-15 8-25 8-3 0-4-2-3-5 1-6 4-15 7-21z" fill="#fff3c9" />
    </Ico>
);

const NetEase = () => (
    <Ico w={36} h={36}>
        <rect width="36" height="36" rx="8" fill="#f5294f" />
        <circle cx="18" cy="21" r="10" stroke="#fff" strokeWidth="3" />
        <circle cx="18" cy="20" r="4" stroke="#fff" strokeWidth="2.5" />
        <path d="M23 6c-4 0-6 3-5 7l2 7" stroke="#fff" strokeWidth="3" />
    </Ico>
);

const Snip = () => (
    <Ico w={37} h={36}>
        <rect x="0" y="0" width="24" height="24" rx="2" fill="#eef0f3" />
        <path d="M3 4v14M3 3h14" stroke="#e0431f" strokeWidth="4" strokeDasharray="3 2" />
        <path d="M17 8v24" stroke="#8e9aa6" strokeWidth="3" />
        <path d="M8 20h22" stroke="#9aa5b0" strokeWidth="4" />
        <circle cx="33" cy="17" r="4" stroke="#1e90e0" strokeWidth="2" />
        <circle cx="19" cy="33" r="3" stroke="#1e90e0" strokeWidth="2" />
    </Ico>
);

const NewsArt = () => (
    <Ico w={28} h={36}>
        <path d="M3 0h22a3 3 0 0 1 3 3v30a3 3 0 0 1-3 3H3a3 3 0 0 1-3-3V3a3 3 0 0 1 3-3z" fill="#3ba8ef" />
        <path d="M4 12h5v10H4zM11 18h5v4h-5zM18 14h5v8h-5z" fill="#0d62bb" />
        <path d="M4 26h20M4 31h20" stroke="#fff" strokeWidth="2.4" />
    </Ico>
);

const WifiIcon = () => (
    <Ico w={24} h={24} color="#222">
        <path d="M1 9a15 15 0 0 1 22 0M5 13a10 10 0 0 1 14 0M8.5 17a5 5 0 0 1 7 0" stroke="currentColor" strokeWidth="1.8" />
        <circle cx="12" cy="21" r="2" fill="currentColor" />
    </Ico>
);

const VolumeIcon = () => (
    <Ico w={24} h={24} color="#222">
        <path d="M1 9h4l6-6v18l-6-6H1z" stroke="currentColor" strokeWidth="1.4" />
        <path d="M14 7a7 7 0 0 1 0 10" stroke="currentColor" strokeWidth="1.4" />
        <path d="M18 3a12 12 0 0 1 0 18" stroke="#999" strokeWidth="1.4" />
    </Ico>
);

const BatteryIcon = () => (
    <Ico w={26} h={28} color="#222">
        <rect x="1" y="7" width="21" height="18" rx="2" stroke="currentColor" strokeWidth="2" />
        <path d="M3 11h11v12H3z" fill="currentColor" />
        <path d="M23 12h3v8h-3z" fill="currentColor" />
        <path d="M9 1l2 8 4-2" stroke="#222" strokeWidth="1.6" />
    </Ico>
);

const BellIcon = () => (
    <Ico w={20} h={32} color="#0b3f9c">
        <path d="M10 0c4 0 7 5 7 12 0 5 1 8 3 11H0c2-3 3-6 3-11C3 5 6 0 10 0z" fill="currentColor" />
        <path d="M6 25h8l-4 6z" fill="currentColor" />
    </Ico>
);

/* ---------- waveform + ruler drawings ---------- */

const SEGMENTS = [
    [30, 46, 1, 'decay'], [48, 55, .8], [56, 71, .35], [72, 84, .8], [85, 101, .85], [121, 140, .45],
    [141, 150, .85], [158, 163, .5], [163, 180, .35], [180, 193, .8], [202, 220, .12], [254, 280, .6],
    [282, 308, .4], [321, 340, .55], [340, 366, .4], [366, 383, .3], [425, 450, .6, 'diamond'],
    [466, 547, .6], [555, 612, .45], [629, 702, .55], [730, 753, 1, 'decay'], [768, 874, .7], [893, 939, .7], [955, 990, .6],
];

const noise = x => {
    const v = Math.sin(x * 12.9898) * 43758.5453;
    return v - Math.floor(v);
};

const waveTop = (x, maxAmp, seed) => {
    for (const [a, b, amp, kind] of SEGMENTS) {
        if (x >= a && x < b) {
            const t = (x - a) / (b - a);
            const edge = Math.pow(Math.sin(Math.PI * t), 0.35);
            if (kind === 'diamond') return Math.max(1, amp * (1 - Math.abs(t - 0.5) * 1.8) * maxAmp);
            const coarse = noise(Math.floor(x / 5) * 1.37);
            const fine = noise(x * 0.71 + seed);
            let shape = edge * (0.58 + 0.42 * coarse) * (0.82 + 0.18 * fine);
            if (kind === 'decay') shape = (t < 0.2 ? t * 5 : 1 - (t - 0.2) * 0.9) * (0.85 + 0.15 * fine);
            if (b - a > 50 && coarse > 0.85) shape = Math.min(1.4, shape * 1.4);
            return Math.max(1, amp * shape * maxAmp);
        }
    }
    return 1;
};

const wavePath = (centre, maxAmp, seed) => {
    let up = `M0 ${centre}`;
    let down = '';
    for (let x = 0; x <= 998; x += 2) {
        up += `L${x} ${(centre - waveTop(x, maxAmp * 0.85, seed)).toFixed(1)}`;
        down = `L${x} ${(centre + waveTop(x, maxAmp, seed + 3)).toFixed(1)}` + down;
    }
    return `${up}L998 ${centre}${down}Z`;
};

const ClipArt = () => (
    <Ico w={998} h={195}>
        <path d={wavePath(61, 24, 1)} fill="#43d6a2" />
        <path d={wavePath(151, 24, 2)} fill="#43d6a2" />
        <rect y="82" width="998" height="3" fill="#7f9f76" />
        <rect y="106" width="998" height="1" fill="#5f8590" />
        <rect y="107" width="998" height="3" fill="#a6dcff" />
        <path d="M0 183l10 10M0 188l5 5" stroke="#0b1f18" strokeWidth="1.4" />
    </Ico>
);

const RulerTicks = () => {
    const ticks = [];
    for (let i = 0; i <= 30; i++) {
        const x = 1 + i * 33.28;
        const major = i % 5 === 0;
        ticks.push(<rect key={i} x={x} y={major ? 1 : 6} width="1.4" height={major ? 13 : 8} fill={major ? '#7c7c7c' : '#6a6a6a'} />);
    }
    return <Ico w={1000} h={14}>{ticks}</Ico>;
};

const LevelScale = () => {
    const ticks = [];
    for (let i = 0; i <= 60; i++) {
        const x = 2 + i * 27.3;
        const major = i % 3 === 0;
        ticks.push(<rect key={i} x={x} y="0" width="1" height={major ? 7 : 3} fill="#6a6a6a" />);
    }
    return <Ico w={1660} h={7}>{ticks}</Ico>;
};

/* ---------- data ---------- */

const TRACKS = [
    { id: 1, color: '#2fa97f', selected: true },
    { id: 2, color: '#33204e' },
    { id: 3, color: '#47401a' },
    { id: 4, color: '#143330' },
    { id: 5, color: '#391e42' },
];

const RULER = ['5.0', '10.0', '15.0', '20.0', '25.0', '30.0'];
const LEVELS = [-57, -54, -51, -48, -45, -42, -39, -36, -33, -30, -27, -24, -21, -18, -15, -12, -9, -6, -3, 0];
const MENUS = ['文件(F)', '编辑(E)', '多轨(M)', '剪辑(C)', '效果(S)', '收藏夹(R)', '视图(V)', '窗口(W)', '帮助(H)'];

const Track = ({ track }) => (
    <TrackHeader $selected={track.selected}>
        <TrackStrip $color={track.color} />
        <TrackBody>
            <TrackTitleRow>
                <Waves />
                <TrackName>轨道 {track.id}</TrackName>
                <TrackButtons>
                    <TrackButton $selected={track.selected}>M</TrackButton>
                    <TrackButton $selected={track.selected}>S</TrackButton>
                    <TrackButton $selected={track.selected}>R</TrackButton>
                    <TrackButton $dim>I</TrackButton>
                </TrackButtons>
            </TrackTitleRow>
            <TrackLower>
                <TrackControls>
                    <MeterRow>
                        <VolumeBars />
                        <Knob />
                        <BlueValue $w={55}>+0</BlueValue>
                        <PanBars />
                        <Knob />
                        <BlueValue $w={46}>0</BlueValue>
                        <Broadcast />
                    </MeterRow>
                    <RouteRow $mt={6}>
                        <RouteIcon><ArrowRight /></RouteIcon>
                        <RouteCombo>默认立体声输入<Chevron /></RouteCombo>
                        <PhaseBox><PhaseIcon /></PhaseBox>
                    </RouteRow>
                    <RouteRow $mt={7}>
                        <RouteIcon><ArrowLeft /></RouteIcon>
                        <RouteCombo>混合<Chevron /></RouteCombo>
                    </RouteRow>
                    <RouteRow $mt={27}>
                        <RouteIcon><Chevron /></RouteIcon>
                        <RouteCombo>读取<ChevronDown /></RouteCombo>
                    </RouteRow>
                </TrackControls>
                <MeterBox>
                    <MeterCaps>
                        <MeterCap />
                        <MeterCap $sep />
                    </MeterCaps>
                </MeterBox>
            </TrackLower>
        </TrackBody>
    </TrackHeader>
);

const App = () => (
    <Page>
        <GlobalStyle />
        <TitleBar>
            <AuLogo $size={24}>Au</AuLogo>
            <AppName>Adobe Audition</AppName>
            <WindowButtons>
                <WindowButton>
                    <Ico w={14} h={14} color="#333"><path d="M0 7h14" stroke="currentColor" /></Ico>
                </WindowButton>
                <WindowButton>
                    <Ico w={14} h={14} color="#333"><path d="M3 3V1h10v10h-2M1 3h10v10H1z" stroke="currentColor" strokeWidth="1.2" /></Ico>
                </WindowButton>
                <WindowButton>
                    <Ico w={16} h={16} color="#333"><path d="M1 1l14 14M15 1L1 15" stroke="currentColor" strokeWidth="1.2" /></Ico>
                </WindowButton>
            </WindowButtons>
        </TitleBar>
        <MenuBar>
            {MENUS.map(menu => <span key={menu}>{menu}</span>)}
        </MenuBar>
        <Toolbar>
            <Grip />
            <ModeGroup>
                <ModeButton $w={98} $pl={3} $gap={13}><WaveBox />波形</ModeButton>
                <ModeButton $w={100} $active><MultiBox />多轨</ModeButton>
            </ModeGroup>
            <BarDivider $ml={33} />
            <ToolSlot $w={37} $ml={29} $bg="#323232"><BlueSpectrum /></ToolSlot>
            <ToolSlot $w={25} $ml={8} $color="#505050"><WaveBox /></ToolSlot>
            <BarDivider $ml={17} />
            <ToolSlot $w={35} $ml={9} $bg="#1a1a1a"><MoveTool /></ToolSlot>
            <ToolSlot $ml={4}><Razor /></ToolSlot>
            <ToolSlot><TimeSel /></ToolSlot>
            <ToolSlot><IBeam /></ToolSlot>
            <ToolSlot><Marquee /></ToolSlot>
            <ToolSlot><Lasso /></ToolSlot>
            <ToolSlot><Brush /></ToolSlot>
            <ToolSlot><Heal /></ToolSlot>
            <WorkspaceGroup>
                <BarDivider />
                <WorkspaceItem $ml={32} $active>默认</WorkspaceItem>
                <IconSpot $ml={26}><Ico w={12} h={12} color="#2f86e6"><path d="M1 1h10M1 6h10M1 11h10" stroke="currentColor" strokeWidth="1.6" /></Ico></IconSpot>
                <WorkspaceItem $ml={27}>编辑音频到视频</WorkspaceItem>
                <WorkspaceItem $ml={63}>无线电作品</WorkspaceItem>
                <IconSpot $ml={62}><DoubleChevron size={15} /></IconSpot>
                <IconSpot $ml={15}><BarDivider /></IconSpot>
                <HelpSearch>
                    <Magnifier size={20} />
                    搜索帮助
                </HelpSearch>
            </WorkspaceGroup>
        </Toolbar>
        <Workspace>
            <LeftColumn>
                <Panel $h={388}>
                    <Tabs $gap={31}>
                        <Tab $active>文件<MenuLines /></Tab>
                        <Tab>收藏夹</Tab>
                    </Tabs>
                    <IconRow $h={46} $pl={14}>
                        <FolderOpen />
                        <IconSpot $ml={17}><FolderImport /></IconSpot>
                        <IconSpot $ml={12}><NewFile /></IconSpot>
                        <IconSpot $ml={57}><ImportDim /></IconSpot>
                        <IconSpot $ml={17}><Trash /></IconSpot>
                        <SearchBox $ml={13}><MiniSearch /></SearchBox>
                    </IconRow>
                    <HeadRow $ml={14}>
                        <HeadCell $w={266}>名称<Ico w={12} h={16} color="#8a8a8a"><path d="M6 0v10" stroke="currentColor" strokeWidth="3" /><path d="M0 8h12l-6 8z" fill="currentColor" /></Ico></HeadCell>
                        <HeadCell $w={62} $sep $pl={8}>状态</HeadCell>
                        <HeadCell $w={130} $sep $pl={6}>持续时间</HeadCell>
                    </HeadRow>
                    <ListBox>
                        <ListRow $color="#2f86e6">
                            <ChevCell $w={45} />
                            <SessionIcon />
                            <FileName>片头.sesx</FileName>
                            0:53.497
                        </ListRow>
                        <ListRow>
                            <ChevCell $w={45} $pl={6}><Chevron /></ChevCell>
                            <Waves color="#a8a8a8" />
                            <FileName $tight={-0.8}>2024刺鸟点..._缩混.mp3</FileName>
                            0:48.633
                        </ListRow>
                        <ScrollThumb $w={110} />
                    </ListBox>
                    <PlayRow $h={50} $pl={189}>
                        <PlayDim />
                        <IconSpot $ml={30}><LoopIcon /></IconSpot>
                        <IconSpot $ml={25}><Speaker /></IconSpot>
                    </PlayRow>
                </Panel>
                <Panel $h={594}>
                    <Tabs $h={37} $gap={32} $pl={17}>
                        <Tab $active>媒体浏览器<MenuLines /></Tab>
                        <Tab>效果组</Tab>
                        <Tab $ml={22}>标记</Tab>
                        <Tab $ml={25}>属性</Tab>
                        <TabDivider />
                        <Tab $ml={-8}><IconSpot $ml={16}><DoubleChevron /></IconSpot></Tab>
                    </Tabs>
                    <IconRow $h={49} $pl={15}>
                        <ImportDown />
                        <ContentLabel>内容:</ContentLabel>
                        <ComboBox $w={243} $ml={6}>驱动器<ChevronDown /></ComboBox>
                        <IconSpot $ml={18}><ArrowBack /></IconSpot>
                    </IconRow>
                    <Split>
                        <TreeColumn>
                            <TreeRow $pl={8}>
                                <ChevronDown />
                                <IconSpot $ml={15}><DriveDim /></IconSpot>
                                <IconSpot $ml={9}>驱动器</IconSpot>
                            </TreeRow>
                            <TreeRow $pl={40}>
                                <Chevron />
                                <IconSpot $ml={15}><DiskIcon system /></IconSpot>
                                <IconSpot $ml={10}>C:</IconSpot>
                            </TreeRow>
                            <TreeRow $pl={40}>
                                <Chevron />
                                <IconSpot $ml={15}><DiskIcon /></IconSpot>
                                <IconSpot $ml={10}>D:</IconSpot>
                            </TreeRow>
                            <TreeRow $pl={5}>
                                <Chevron />
                                <IconSpot $ml={19}><ShortcutIcon /></IconSpot>
                                <IconSpot $ml={9}>快捷方式</IconSpot>
                            </TreeRow>
                            <ScrollThumb $w={84} />
                        </TreeColumn>
                        <Splitter>
                            <SplitterArrow />
                            <SplitterDots />
                        </Splitter>
                        <ListColumn>
                            <HeadRow $ml={6} $mr={7}>
                                <HeadCell $w={300}>名称<Ico w={12} h={14} color="#8a8a8a"><path d="M6 14V6" stroke="currentColor" strokeWidth="3" /><path d="M0 7h12L6 0z" fill="currentColor" /></Ico></HeadCell>
                                <HeadCell $w={46} $sep $pl={6}>持续时间</HeadCell>
                            </HeadRow>
                            <ListBox $ml={0} $mr={7}>
                                <ListRow $color="#767676">
                                    <ChevCell $w={35} $pl={7}><Chevron /></ChevCell>
                                    <DiskIcon system />
                                    <IconSpot $ml={12}>C:</IconSpot>
                                </ListRow>
                                <ListRow $color="#767676">
                                    <ChevCell $w={35} $pl={7}><Chevron /></ChevCell>
                                    <DiskIcon />
                                    <IconSpot $ml={12}>D:</IconSpot>
                                </ListRow>
                                <ScrollThumb $w={64} />
                            </ListBox>
                            <PlayRow $h={46} $pl={120}>
                                <PlayDim />
                                <IconSpot $ml={30}><LoopIcon /></IconSpot>
                                <IconSpot $ml={25}><Speaker /></IconSpot>
                            </PlayRow>
                        </ListColumn>
                    </Split>
                </Panel>
                <Panel>
                    <Tabs $gap={31} $pl={17}>
                        <Tab $active>历史记录<MenuLines /></Tab>
                        <Tab>视频</Tab>
                    </Tabs>
                    <ListBox $mt={11} $mr={7}>
                        <ListRow $h={28} $bg="#4a4a4a">
                            <ChevCell $w={31} $pl={3}><PlayDim color="#a8a8a8" /></ChevCell>
                            <HistoryDoc />
                            <HistoryName>打开</HistoryName>
                        </ListRow>
                    </ListBox>
                    <UndoRow>
                        0撤销
                        <Trash />
                    </UndoRow>
                </Panel>
            </LeftColumn>
            <MainColumn>
                <UpperRow>
                    <Panel $w={1386}>
                        <Tabs $pl={14} $gap={29}>
                            <Tab $active $tight={-0.3}>编辑器: 片头.sesx<MenuLines /></Tab>
                            <Tab>混音器</Tab>
                        </Tabs>
                        <Overview>
                            <OverviewTrack>
                                <OverviewThumb />
                                <OverviewLine />
                            </OverviewTrack>
                            <OverviewZoom><ZoomToFit /></OverviewZoom>
                        </Overview>
                        <TimelineHead>
                            <TrackTools>
                                <ButtonStrip>
                                    <StripButton $active><ToolSwap /></StripButton>
                                    <StripButton><FxText>fx</FxText></StripButton>
                                    <StripButton><SendIcon /></StripButton>
                                    <StripButton><EqBars /></StripButton>
                                </ButtonStrip>
                                <IconSpot $ml={72}><Metronome /></IconSpot>
                                <IconSpot $ml={12}><TimerIcon /></IconSpot>
                                <IconSpot $ml={5}><StripButton $active><MagnetIcon /></StripButton></IconSpot>
                                <IconSpot $ml={11}><PinIcon /></IconSpot>
                            </TrackTools>
                            <Ruler>
                                <RulerLabels>
                                    <RulerLabel $w={83} $first>hms</RulerLabel>
                                    {RULER.map(label => <RulerLabel key={label} $w={166.4}>{label}</RulerLabel>)}
                                </RulerLabels>
                                <RulerTicks />
                            </Ruler>
                        </TimelineHead>
                        <Arrange>
                            <TrackList>
                                {TRACKS.map(track => <Track key={track.id} track={track} />)}
                            </TrackList>
                            <Lanes>
                                <Lane>
                                    <Clip>
                                        <ClipArt />
                                        <ClipTitle>2024刺鸟点歌台片头_缩混</ClipTitle>
                                        <FadeBadge>
                                            <Ico w={18} h={18}>
                                                <rect width="18" height="18" fill="#9a9a9a" />
                                                <path d="M2 16L16 2v14z" fill="#3c3f3e" />
                                            </Ico>
                                        </FadeBadge>
                                        <GainBars>
                                            <Ico w={14} h={12}>
                                                <path d="M0 8h2v4H0zM4 6h2v6H4zM8 3h2v9H8zM12 0h2v12h-2z" fill="#b8cfc4" />
                                            </Ico>
                                        </GainBars>
                                    </Clip>
                                </Lane>
                                <Lane />
                                <Lane />
                                <Lane />
                                <Lane />
                            </Lanes>
                            <ZoomScroll>
                                <ZoomFrame>
                                    <ZoomHandle $top />
                                    <ZoomSwatch $h={141} $color="#55b795" />
                                    <ZoomSwatch $h={141} $color="#5a4a6c" />
                                    <ZoomSwatch $h={141} $color="#6a6540" />
                                    <ZoomSwatch $h={141} $color="#475a58" />
                                    <ZoomSwatch $h={141} $color="#5f4964" />
                                    <ZoomHandle />
                                </ZoomFrame>
                                <OuterSwatch $h={142} $color="#2b3a1c" />
                                <OuterSwatch $h={140} $color="#162a45" />
                            </ZoomScroll>
                            <Playhead>
                                <PlayheadCap>
                                    <Ico w={16} h={18}><path d="M0 0h16v10l-8 8-8-8z" fill="#2c86e8" /></Ico>
                                </PlayheadCap>
                            </Playhead>
                        </Arrange>
                        <Transport>
                            <TimeValue>0:00.000</TimeValue>
                            <TransportButtons>
                                {TransportIcons.map(icon => <TransportCell key={icon.key}>{icon}</TransportCell>)}
                            </TransportButtons>
                            <ZoomButtons>
                                {ZoomIcons.map(icon => <ZoomCell key={icon.key}>{icon}</ZoomCell>)}
                            </ZoomButtons>
                        </Transport>
                    </Panel>
                    <Panel>
                        <SoundHeader>基本声音<MenuLines mt={2} /></SoundHeader>
                        <SoundRow $h={45}>2024刺鸟点歌台片头_缩混</SoundRow>
                        <SoundRow $h={54}>预设:<PresetSelect><ChevronDown /></PresetSelect></SoundRow>
                        <SoundRow $h={47} />
                        <SoundHint>为所选项分配标记以启用基于音频类型的编辑选项。</SoundHint>
                        <SoundButtons>
                            <SoundButton><SpeechIcon />对话</SoundButton>
                            <SoundButton><NoteIcon />音乐</SoundButton>
                            <SoundButton><BurstIcon />SFX</SoundButton>
                            <SoundButton><LeafIcon />环境</SoundButton>
                        </SoundButtons>
                    </Panel>
                </UpperRow>
                <LowerRow>
                    <Panel $w={1675}>
                        <PanelTitle $pl={17}>电平<MenuLines mt={2} /></PanelTitle>
                        <LevelBar>
                            <LevelPeak />
                            <ClipLeds>
                                <ClipLed />
                                <ClipLed $sep />
                            </ClipLeds>
                        </LevelBar>
                        <LevelTicks><LevelScale /></LevelTicks>
                        <LevelLabels>
                            <LevelLabel $w={44} $first>dB</LevelLabel>
                            {LEVELS.map(level => <LevelLabel key={level} $w={81.85}>{level}</LevelLabel>)}
                        </LevelLabels>
                    </Panel>
                    <Panel>
                        <PanelTitle $pl={16}>选区/视图<MenuLines mt={2} /></PanelTitle>
                        <SelectionGrid>
                            <span />
                            <GridHead $ml={-3}>开始</GridHead>
                            <GridHead>结束</GridHead>
                            <GridHead>持续时间</GridHead>
                            <span>选区</span>
                            <GridValue>0:00.000</GridValue>
                            <GridValue>0:00.000</GridValue>
                            <GridValue>0:00.000</GridValue>
                            <span>视图</span>
                            <GridValue>0:00.000</GridValue>
                            <GridValue>0:30.000</GridValue>
                            <GridValue>0:30.000</GridValue>
                        </SelectionGrid>
                    </Panel>
                </LowerRow>
            </MainColumn>
        </Workspace>
        <StatusBar>
            <StatusMessage>{'多轨会话备份保存已完成\uFF0C用时 0.00 秒'}</StatusMessage>
            <StatusCell $w={75} />
            <StatusCell $w={178} />
            <StatusCell $w={189} $pl={13}>48000 Hz • 32 位混合</StatusCell>
            <StatusCell $w={91} $pl={12}>19.59 MB</StatusCell>
            <StatusCell $w={99} $pl={26}>0:53.497</StatusCell>
            <StatusCell $w={138} $pl={13}>107.84 GB 空闲</StatusCell>
            <StatusCell $w={1} />
        </StatusBar>
        <Taskbar>
            <NewsWidget>
                <NewsIcon>
                    <NewsArt />
                    <NewsBadge>1</NewsBadge>
                </NewsIcon>
                <NewsText>
                    <div>即将发布</div>
                    <NewsSub>财报</NewsSub>
                </NewsText>
            </NewsWidget>
            <StartButton><WindowsLogo /></StartButton>
            <TaskSearch>
                <TaskMag />
                搜索
                <SearchArt><SearchScene /></SearchArt>
            </TaskSearch>
            <TaskApps>
                <TaskApp><TaskViewIcon /></TaskApp>
                <TaskApp><EdgeIcon /><TaskDot /></TaskApp>
                <TaskApp><FolderIcon /><TaskDot /></TaskApp>
                <TaskApp><StoreIcon /></TaskApp>
                <TaskApp><RingApp /></TaskApp>
                <TaskApp><OrangeApp /></TaskApp>
                <TaskApp><NetEase /><TaskDot /></TaskApp>
                <TaskApp><Snip /><TaskDot /></TaskApp>
                <TaskApp>
                    <TaskActive />
                    <AuLogo $size={36} style={{ position: 'relative' }}>Au</AuLogo>
                    <TaskActiveBar />
                </TaskApp>
            </TaskApps>
            <Tray>
                <Ico w={16} h={10} color="#222"><path d="M1 9l7-7 7 7" stroke="currentColor" strokeWidth="1.6" /></Ico>
                <TrayInput $ml={29}>中</TrayInput>
                <TrayCell $ml={26}><WifiIcon /></TrayCell>
                <TrayCell $ml={9}><VolumeIcon /></TrayCell>
                <TrayCell $ml={14}><BatteryIcon /></TrayCell>
                <ClockBox>
                    <div>19:50</div>
                    <div>2024/7/17</div>
                </ClockBox>
                <TrayCell $ml={13}><BellIcon /></TrayCell>
            </Tray>
        </Taskbar>
        <Lyric>
            <LyricInner>场反复重演的那一天<LyricGap>-</LyricGap>夏日入侵企画</LyricInner>
        </Lyric>
    </Page>
);

export default App;
